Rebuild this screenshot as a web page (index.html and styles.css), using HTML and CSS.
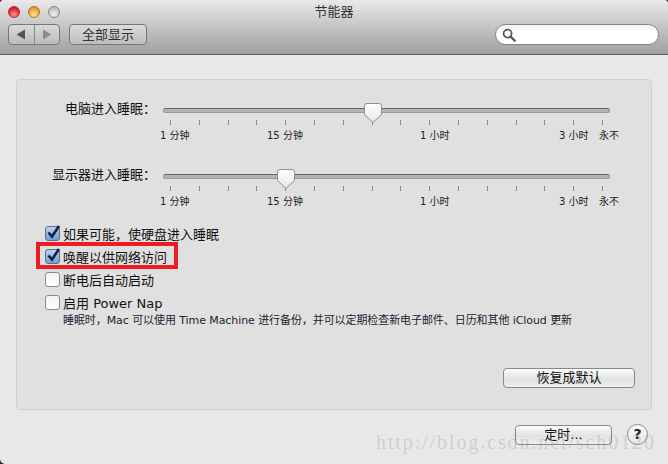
FILE: index.html

```html
<!DOCTYPE html>
<html lang="zh-CN">
<head>
  <meta charset="UTF-8" />
  <meta name="viewport" content="width=device-width, initial-scale=1.0" />
  <title>节能器</title>
  <link rel="stylesheet" href="styles.css">
</head>
<body>

  <div class="window">
    <div class="toolbar">
      <div class="lights">
        <span class="light red"></span>
        <span class="light yellow"></span>
        <span class="light gray"></span>
      </div>
      <div class="title">节能器</div>
      <div class="tools">
        <div class="nav">
          <span class="nav-part nav-back"><svg width="10" height="11" viewBox="0 0 10 11"><path d="M0.5 5.5 9 0.5 V10.5 Z" fill="#555"/></svg></span>
          <span class="nav-part"><svg width="10" height="11" viewBox="0 0 10 11"><path d="M9.5 5.5 1 0.5 V10.5 Z" fill="#8c8c8c"/></svg></span>
        </div>
        <button class="tool-btn">全部显示</button>
        <div class="search">
          <svg width="14" height="14" viewBox="0 0 14 14"><circle cx="5.6" cy="5.6" r="4" fill="none" stroke="#555" stroke-width="1.8"/><path d="M8.6 8.6 12.8 12.8" stroke="#555" stroke-width="2.2" stroke-linecap="round"/></svg>
        </div>
      </div>
    </div>

    <div class="content">
      <div class="panel">

        <div class="slider-row">
          <div class="slider-label">电脑进入睡眠：</div>
          <div>
            <div class="track-wrap">
              <div class="track"></div>
              <svg class="thumb thumb-computer" width="18" height="20" viewBox="0 0 18 20"><defs><linearGradient id="thumbFill" x1="0" y1="0" x2="0" y2="1"><stop offset="0" stop-color="#ffffff"/><stop offset="1" stop-color="#e6e6e6"/></linearGradient></defs><path d="M3 .5H15A2.500 2.500 0 0 1 17.500 3V11.500L9 19.500.5 11.500V3A2.500 2.500 0 0 1 3 .5Z" fill="url(#thumbFill)" stroke="#8f8f8f"/></svg>
            </div>
            <div class="ticks"><i></i><i></i><i></i><i></i><i></i><i></i><i></i><i></i><i></i><i></i><i></i><i></i><i></i><i></i><i></i><i></i></div>
            <div class="scale">
              <span class="mark-1m">1 分钟</span>
              <span class="mark-15m">15 分钟</span>
              <span class="mark-1h">1 小时</span>
              <span class="mark-3h">3 小时</span>
              <span>永不</span>
            </div>
          </div>
        </div>

        <div class="slider-row">
          <div class="slider-label">显示器进入睡眠：</div>
          <div>
            <div class="track-wrap">
              <div class="track"></div>
              <svg class="thumb thumb-display" width="18" height="20" viewBox="0 0 18 20"><path d="M3 .5H15A2.500 2.500 0 0 1 17.500 3V11.500L9 19.500.5 11.500V3A2.500 2.500 0 0 1 3 .5Z" fill="url(#thumbFill)" stroke="#8f8f8f"/></svg>
            </div>
            <div class="ticks"><i></i><i></i><i></i><i></i><i></i><i></i><i></i><i></i><i></i><i></i><i></i><i></i><i></i><i></i><i></i><i></i></div>
            <div class="scale">
              <span class="mark-1m">1 分钟</span>
              <span class="mark-15m">15 分钟</span>
              <span class="mark-1h">1 小时</span>
              <span class="mark-3h">3 小时</span>
              <span>永不</span>
            </div>
          </div>
        </div>

        <div class="options">
          <div class="option">
            <span class="check on"><svg width="16" height="16" viewBox="0 0 16 16"><path d="M3.500 7.500 7 11.500 14 1" fill="none" stroke="#10233f" stroke-width="2.600"/></svg></span>
            如果可能，使硬盘进入睡眠
          </div>
          <div class="option">
            <span class="check on"><svg width="16" height="16" viewBox="0 0 16 16"><path d="M3.500 7.500 7 11.500 14 1" fill="none" stroke="#10233f" stroke-width="2.600"/></svg></span>
            唤醒以供网络访问
            <div class="highlight"></div>
          </div>
          <div class="option"><span class="check"></span>断电后自动启动</div>
          <div class="option"><span class="check"></span>启用 Power Nap</div>
          <div class="note">睡眠时，Mac 可以使用 Time Machine 进行备份，并可以定期检查新电子邮件、日历和其他 iCloud 更新</div>
        </div>

        <button class="btn restore">恢复成默认</button>
      </div>

      <div class="footer">
        <button class="btn timer">定时...</button>
        <span class="help">?</span>
      </div>
    </div>

    <div class="watermark">http://blog.csdn.net/sch0120</div>
  </div>

</body>
</html>
```

FILE: styles.css

```css
* { box-sizing: border-box; }
html, body { margin: 0; height: 100%; background: #222; overflow: hidden; }
body { font-family: "DejaVu Sans", "Noto Sans CJK SC", sans-serif; color: #111; }

.window { position: relative; width: 668px; height: 464px; background: #e8e8e8; border-radius: 4px 4px 0 5px; overflow: hidden; }

.toolbar { position: relative; height: 55px; padding: 24px 9px 0 8px; background: linear-gradient(#e9e9e9, #9f9f9f); border-bottom: 1px solid #5a5a5a; }
.title { position: absolute; top: 3px; left: 0; right: 0; text-align: center; font-size: 13px; line-height: 17px; color: #333; }

.lights { position: absolute; top: 6px; left: 8px; display: flex; gap: 8px; }
.light { width: 12px; height: 12px; border-radius: 50%; border: 1px solid #777; }
.light.red { background: radial-gradient(circle at 50% 75%, #ff9a9a, #e2202c 65%, #b01020); border-color: #a33; }
.light.yellow { background: radial-gradient(circle at 50% 75%, #ffe49a, #f0a030 65%, #c07a10); border-color: #a87a30; }
.light.gray { background: radial-gradient(circle at 50% 75%, #f0f0f0, #c4c4c4 65%, #a8a8a8); border-color: #888; }

.tools { display: flex; align-items: flex-start; }
.nav { display: flex; width: 52px; height: 21px; border: 1px solid #777; border-radius: 4px; background: linear-gradient(#d9d9d9, #bcbcbc); }
.nav-part { flex: 1; display: flex; align-items: center; justify-content: center; }
.nav-back { border-right: 1px solid #8a8a8a; }
.tool-btn { width: 78px; height: 21px; margin-left: 9px; padding: 0; border: 1px solid #777; border-radius: 4px; background: linear-gradient(#dcdcdc, #bdbdbd); font: 13px/19px "DejaVu Sans", "Noto Sans CJK SC", sans-serif; color: #333; }
.search { width: 164px; height: 21px; margin-left: auto; padding: 3px 0 0 6px; border: 1px solid #858585; border-radius: 11px; background: linear-gradient(#f2f2f2, #fff 40%); }
.search svg { display: block; }

.content { padding: 24px 16px 0; }
.panel { display: flex; flex-direction: column; height: 331px; padding: 20px 16px 21px 0; background: #e0e0e0; border: 1px solid #cfcfcf; border-radius: 4px; }

.slider-row { display: grid; grid-template-columns: 130px 447px; column-gap: 16px; height: 41px; }
.slider-row + .slider-row { margin-top: 25px; }
.slider-label { margin-right: -9px; padding-top: 1px; font-size: 13px; line-height: 16px; text-align: right; white-space: nowrap; }
.track-wrap { position: relative; height: 20px; padding-top: 8px; }
.track { height: 5px; border-radius: 3px; border: 1px solid #999; border-top-color: #666; background: #b4b4b4; }
.thumb { position: absolute; top: 3px; }
.thumb-computer { left: 201px; }
.thumb-display { left: 114px; }
.ticks { display: flex; justify-content: space-between; width: 433px; height: 5px; margin-left: 7px; }
.ticks i { width: 1px; background: #888; }
.scale { display: flex; margin-top: 5px; font-size: 10px; line-height: 12px; color: #222; white-space: nowrap; }
.scale span { display: block; flex: none; }
.mark-1m { width: 107px; margin-left: -3px; }
.mark-15m { width: 153px; }
.mark-1h { width: 139px; }
.mark-3h { width: 40px; }

.options { margin-top: 15px; padding-left: 28px; }
.option { position: relative; display: flex; align-items: center; height: 23px; font-size: 13px; white-space: nowrap; }
.check { flex: none; width: 15px; height: 15px; margin-right: 3px; border: 1px solid #8a8a8a; border-radius: 3px; background: linear-gradient(#f4f4f4, #fff); }
.check.on { background: linear-gradient(#b9d2ee, #6f9ed6); border-color: #5d6f88; }
.check svg { display: block; margin: -2px 0 0 -1px; }
.note { margin-left: 18px; font-size: 11px; letter-spacing: -0.080px; line-height: 14px; white-space: nowrap; color: #1c2330; }
.highlight { position: absolute; top: -3px; left: -9px; width: 142px; height: 27px; border: 4px solid #ed1c24; }

.btn { height: 20px; padding: 0; border: 1px solid #888; border-radius: 4px; background: linear-gradient(#fdfdfd, #e2e2e2 55%, #efefef); font: 13px/18px "DejaVu Sans", "Noto Sans CJK SC", sans-serif; color: #111; }
.restore { width: 132px; margin-top: auto; align-self: flex-end; }
.footer { display: flex; justify-content: flex-end; align-items: flex-start; gap: 15px; padding: 15px 4px 0 0; }
.timer { width: 97px; }
.help { width: 21px; height: 21px; margin-top: -1px; border: 1px solid #8a8a8a; border-radius: 50%; background: linear-gradient(#fdfdfd, #e4e4e4); text-align: center; font-size: 14px; font-weight: bold; line-height: 19px; color: #222; }

.watermark { position: absolute; left: 376px; top: 432px; font: 20px/20px "Liberation Serif", serif; letter-spacing: 1.900px; color: rgba(150, 150, 150, 0.32); white-space: nowrap; }
```
